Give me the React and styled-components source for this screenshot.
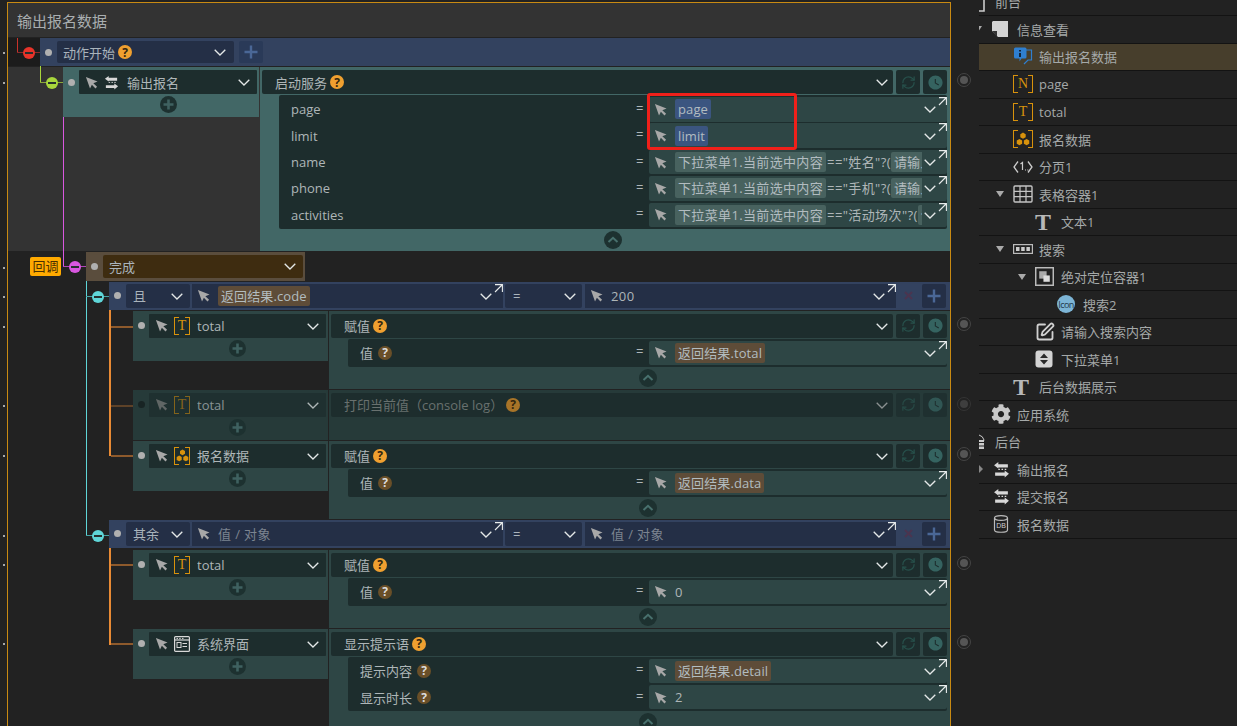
import React from 'react';
import styled, { createGlobalStyle } from 'styled-components';
import { RefreshCw, SquarePen } from 'lucide-react';
import { FaCog } from 'react-icons/fa';
import { MdWatchLater } from 'react-icons/md';

const Global = createGlobalStyle`
  html, body { margin: 0; padding: 0; background: #222; }
  body {
    font-family: "Open Sans", "Noto Sans CJK SC", sans-serif;
    font-size: 13px;
    color: #aeb6b8;
  }
  * { box-sizing: border-box; }
`;

const Page = styled.div`
  position: relative;
  display: flex;
  width: 1237px;
  height: 726px;
  overflow: hidden;
  background: #222;
`;

const SideGutter = styled.div`
  position: relative;
  flex: none;
  width: ${p => p.$w}px;
`;

const Pin = styled.i`
  position: absolute;
  left: 3px;
  top: ${p => p.$y}px;
  width: 2px;
  height: 2px;
  background: #aaa;
`;

const Target = styled.i`
  position: absolute;
  left: 6px;
  top: ${p => p.$y - 7}px;
  width: 14px;
  height: 14px;
  border-radius: 50%;
  border: 1px solid #444;
  opacity: ${p => (p.$faint ? 0.55 : 1)};
  &::after {
    content: '';
    position: absolute;
    inset: 2px;
    border-radius: 50%;
    background: #555;
  }
`;

const Editor = styled.div`
  flex: none;
  width: 944px;
  margin-top: 2px;
  border: 1px solid #c98a12;
  border-width: 1px 1px 0;
  height: 724px;
  overflow: hidden;
`;

const Title = styled.div`
  height: 34px;
  padding: 0 9px;
  line-height: 36px;
  font-size: 15px;
  color: #a9aeb0;
  background: #333;
`;

const StartRow = styled.div`
  display: flex;
  margin-top: 1px;
  height: 28px;
`;

const StartGap = styled.div`
  width: 32px;
  background: #1c1c1c;
`;

const Bar = styled.div`
  display: flex;
  align-items: center;
  flex: 1;
  height: 28px;
  background: #33425f;
`;

const CondBar = styled(Bar)`
  flex: none;
  margin: 0 0 ${p => p.$after || 1}px 101px;
`;

const DoneBar = styled(Bar)`
  flex: none;
  width: 219px;
  height: 29px;
  margin: 0 0 1px 78px;
  background: #5a4d3d;
`;

const Dot = styled.i`
  flex: none;
  width: 7px;
  height: 7px;
  margin: 0 ${p => p.$mr ?? 5}px 0 5px;
  border-radius: 50%;
  background: ${p => (p.$off ? '#182424' : '#b0b0b0')};
`;

const Select = styled.div`
  display: flex;
  align-items: center;
  flex: none;
  width: ${p => p.$w}px;
  height: ${p => p.$h || 24}px;
  padding: 0 ${p => p.$right || 6}px 0 ${p => p.$left || 6}px;
  margin-right: ${p => p.$mr || 0}px;
  border-radius: 2px;
  background: ${p => p.$bg || '#242f46'};
  color: #aab4bc;
`;

const Grow = styled.span`
  flex: 1;
  min-width: 0;
  overflow: hidden;
  white-space: nowrap;
`;

const SquareBtn = styled.div`
  display: flex;
  align-items: center;
  justify-content: center;
  flex: none;
  width: 24px;
  height: ${p => p.$h || 24}px;
  margin-left: ${p => p.$ml || 0}px;
  border-radius: 2px;
  background: ${p => p.$bg || 'transparent'};
`;

const Field = styled.div`
  position: relative;
  display: flex;
  align-items: center;
  flex: none;
  width: ${p => p.$w}px;
  height: 24px;
  margin-right: ${p => p.$mr || 0}px;
  padding-left: 5px;
  background: #242f46;
`;

const Corner = styled.svg`
  position: absolute;
  top: 0;
  right: 0;
`;

const Chip = styled.span`
  display: inline-block;
  height: 20px;
  line-height: 20px;
  padding: 0 3px;
  margin-right: 1px;
  border-radius: 2px;
  letter-spacing: ${p => p.$ls || 0.1}px;
  background: ${p => p.$bg};
  color: #b2bcc0;
`;

const Plain = styled.span`
  letter-spacing: 0.4px;
  color: ${p => p.$c || '#aeb6b8'};
`;

const ServiceBand = styled.div`
  display: flex;
  gap: 1px;
  margin-top: 1px;
  margin-bottom: 1px;
  padding-left: 55px;
  background: #333;
`;

const Step = styled.div`
  display: flex;
  gap: 1px;
  margin: 0 0 1px 125px;
`;

const NodeBox = styled.div`
  flex: none;
  align-self: flex-start;
  width: ${p => p.$w}px;
  height: 50px;
  padding: 3px 2px 0 0;
  background: ${p => p.$bg};
`;

const NodeTop = styled.div`
  display: flex;
  align-items: center;
`;

const NodeHead = styled.div`
  display: flex;
  align-items: center;
  flex: 1;
  height: 24px;
  padding: 0 7px 0 6px;
  border-radius: 1px;
  background: #1d2d2d;
  opacity: ${p => (p.$dim ? 0.72 : 1)};
`;

const IconSlot = styled.span`
  display: flex;
  align-items: center;
  flex: none;
  width: 18px;
  height: 18px;
  margin: 0 5px 0 6px;
`;

const AddRow = styled.div`
  display: flex;
  justify-content: center;
  padding: 2px 0 0 16px;
`;

const ActionBox = styled.div`
  flex: 1;
  min-width: 0;
  padding-top: 3px;
  height: ${p => (p.$h ? `${p.$h}px` : 'auto')};
  background: ${p => p.$bg};
`;

const ActionTop = styled.div`
  display: flex;
  gap: 3px;
  margin: 0 3px 1px 2px;
`;

const ActionHead = styled.div`
  display: flex;
  align-items: center;
  flex: 1;
  height: 24px;
  padding: 0 5px 0 13px;
  border-radius: 2px;
  background: #1d2d2d;
  color: ${p => (p.$dim ? '#69716f' : '#aeb6b8')};
`;

const ToolBtn = styled.div`
  display: flex;
  align-items: center;
  justify-content: center;
  width: 24px;
  height: 24px;
  border-radius: 2px;
  background: #1d2d2d;
  opacity: ${p => (p.$dim ? 0.7 : 1)};
`;

const Help = styled.span`
  display: inline-flex;
  align-items: center;
  justify-content: center;
  flex: none;
  width: 14px;
  height: 14px;
  margin-left: 3px;
  border-radius: 50%;
  font-size: 12px;
  font-weight: 700;
  background: ${p => p.$bg || '#f0a030'};
  color: ${p => p.$c || '#33260f'};
`;

const Params = styled.div`
  display: flex;
  flex-direction: column;
  gap: 1.9px;
  margin: 0 3px 0 19px;
  padding: 2px 0;
  border-radius: 2px;
  background: #1d2d2d;
`;

const ParamRow = styled.div`
  display: flex;
  align-items: center;
  height: 24.5px;
  padding-left: 12px;
`;

const ParamLabel = styled.span`
  display: flex;
  align-items: center;
  gap: 2px;
  flex: 1;
`;

const Equal = styled.span`
  flex: none;
  width: 13px;
  margin-top: -3px;
`;

const ValueBox = styled.div`
  position: relative;
  display: flex;
  align-items: center;
  flex: none;
  width: 298px;
  height: 24.5px;
  padding-left: 5px;
  border-radius: 2px;
  background: #2e4645;
`;

const ValueText = styled.span`
  flex: 1;
  min-width: 0;
  margin: 0 2px 0 8px;
  overflow: hidden;
  white-space: nowrap;
`;

const Collapse = styled.div`
  display: flex;
  align-items: center;
  justify-content: center;
  height: 21.5px;
  margin-left: 19px;
  margin-right: 3px;
`;

const Bracket = styled.span`
  position: relative;
  display: inline-flex;
  align-items: center;
  justify-content: center;
  flex: none;
  width: ${p => p.$w || 16}px;
  height: 18px;
  font: 400 14px "Liberation Serif", serif;
  color: ${p => (p.$dim ? '#a87310' : '#d8920c')};
  &::before,
  &::after {
    content: '';
    position: absolute;
    top: 0;
    bottom: 0;
    width: 4px;
    border: 1px solid currentColor;
  }
  &::before { left: 0; border-right: 0; }
  &::after { right: 0; border-left: 0; }
`;

const TreePanel = styled.div`
  flex: 1;
  min-width: 0;
  margin-top: -11.5px;
  overflow: hidden;
`;

const TreeRow = styled.div`
  display: flex;
  align-items: center;
  height: 27.5px;
  border-bottom: 1px solid #131313;
  overflow: hidden;
  background: ${p => (p.$on ? '#473e2c' : 'transparent')};
  color: #a5a9a9;
`;

const TreeInner = styled.div`
  position: relative;
  display: flex;
  align-items: center;
  margin-left: ${p => p.$level * 22 - 10}px;
`;

const TreeIcon = styled.span`
  display: flex;
  align-items: center;
  justify-content: ${p => (p.$center ? 'center' : 'flex-start')};
  flex: none;
  width: 20px;
  height: 20px;
  margin-right: 6px;
`;

const Caret = styled.i`
  position: absolute;
  left: ${p => (p.$small ? -12 : -17)}px;
  top: ${p => (p.$small ? 6 : 7)}px;
  border-style: solid;
  border-color: ${p => (p.$small ? 'transparent transparent transparent #888' : '#aaa transparent transparent')};
  border-width: ${p => (p.$small ? '4px 0 4px 4px' : '6px 4.5px 0')};
`;

const BigT = styled.span`
  font: 700 24px/20px "Liberation Serif", serif;
  color: #b8b8b8;
`;

const IconBadge = styled.span`
  display: flex;
  align-items: center;
  justify-content: center;
  width: 18px;
  height: 18px;
  border-radius: 50%;
  font-size: 9px;
  letter-spacing: -0.6px;
  background: #7db5d6;
  color: #22384a;
`;

const Wire = styled.i`
  position: absolute;
  left: ${p => p.$x}px;
  top: ${p => p.$y}px;
  width: ${p => p.$w || 1}px;
  height: ${p => p.$h || 1}px;
  background: ${p => p.$c};
`;

const Knob = styled.i`
  position: absolute;
  left: ${p => p.$x - 6}px;
  top: ${p => p.$y - 6}px;
  width: 12px;
  height: 12px;
  border-radius: 50%;
  background: ${p => p.$c};
  &::after {
    content: '';
    position: absolute;
    left: 2px;
    right: 2px;
    top: 5px;
    height: 2px;
    background: #26302f;
  }
`;

const CallbackTag = styled.span`
  position: absolute;
  left: 30px;
  top: 257px;
  width: 31px;
  height: 19px;
  border-radius: 2px;
  line-height: 19px;
  text-align: center;
  background: #ffaa00;
  color: #4a3000;
`;

const Highlight = styled.div`
  position: absolute;
  left: 647px;
  top: 93px;
  width: 150px;
  height: 57px;
  border: 3px solid #f0201a;
  border-radius: 3px;
`;

const Arrow = ({ dim }) => (
  <svg width="13" height="13" viewBox="0 0 14 14" style={{ flex: 'none' }}>
    <path d="M1 1 L13.5 6 L9 7.8 L13 11.5 L11.3 13.4 L7.4 9.4 L5.4 13.5 Z" fill={dim ? '#777' : '#a8a8a8'} />
  </svg>
);

const Chevron = ({ mr = 0, c = '#e4e8e8' }) => (
  <svg width="12" height="7" viewBox="0 0 12 7" style={{ flex: 'none', marginRight: mr, marginTop: 1 }}>
    <path d="M0.7 0.7 L6 6 L11.3 0.7" fill="none" stroke={c} strokeWidth="1.3" />
  </svg>
);

const CornerMark = () => (
  <Corner width="9" height="9" viewBox="0 0 9 9">
    <path d="M1 0.6 H8.4 V8 M8 1 L1 8" fill="none" stroke="#e8ecec" strokeWidth="1.1" />
  </Corner>
);

const Swap = ({ c = '#d8d8d8', size = 15 }) => (
  <svg width={size} height={size} viewBox="0 0 16 16">
    <path d="M1 4 L5 1 V3 H14 V6 H5 V7 Z M15 12 L11 9 V10.8 H2 V13.8 H11 V15.5 Z" fill={c} />
    <path d="M5 7.9 H6.5 M8 7.9 H9.5 M11 7.9 H12.5" stroke={c} strokeWidth="1" />
  </svg>
);

const HexStack = ({ size = 13 }) => (
  <svg width={size} height={size} viewBox="0 0 13 13">
    <g fill="currentColor">
      <path d="M6.5 0.5 L9 2 V4.8 L6.5 6.2 L4 4.8 V2 Z" />
      <path d="M3.2 6.6 L5.7 8 V10.9 L3.2 12.3 L0.7 10.9 V8 Z" />
      <path d="M9.8 6.6 L12.3 8 V10.9 L9.8 12.3 L7.3 10.9 V8 Z" />
    </g>
  </svg>
);

const WindowIcon = () => (
  <svg width="16" height="16" viewBox="0 0 16 16">
    <rect x="0.6" y="0.6" width="14.8" height="14.8" rx="1" fill="none" stroke="#d8d8d8" strokeWidth="1.2" />
    <path d="M1 4 H15" stroke="#d8d8d8" strokeWidth="1.2" />
    <path d="M2.5 2.4 H4 M5.2 2.4 H6.7 M8 2.4 H9.5" stroke="#d8d8d8" strokeWidth="1" />
    <rect x="3" y="6.5" width="4" height="5" fill="none" stroke="#d8d8d8" />
    <path d="M8.5 7.5 H13 M8.5 10.5 H13" stroke="#d8d8d8" />
  </svg>
);

const AddCircle = () => (
  <svg width="17" height="17" viewBox="0 0 17 17">
    <circle cx="8.5" cy="8.5" r="8.5" fill="#1d3130" />
    <path d="M8.5 3.5 V13.5 M3.5 8.5 H13.5" stroke="#3f6160" strokeWidth="2.6" />
  </svg>
);

const UpCircle = () => (
  <svg width="18" height="18" viewBox="0 0 18 18">
    <circle cx="9" cy="9" r="9" fill="#1d3130" />
    <path d="M4.5 11 L9 6.8 L13.5 11" fill="none" stroke="#48706d" strokeWidth="2" />
  </svg>
);

const BarPlus = () => (
  <svg width="14" height="14" viewBox="0 0 14 14">
    <path d="M7 0.5 V13.5 M0.5 7 H13.5" stroke="#4a6796" strokeWidth="2.4" />
  </svg>
);

const CrossMark = () => (
  <svg width="9" height="9" viewBox="0 0 9 9">
    <path d="M1 1 L8 8 M8 1 L1 8" stroke="#4a3550" strokeWidth="2" />
  </svg>
);

const Tools = ({ dim }) => (
  <>
    <ToolBtn $dim={dim}>
      <RefreshCw size={15} color="#27504b" strokeWidth={2} />
    </ToolBtn>
    <ToolBtn $dim={dim}>
      <MdWatchLater size={17} color="#356360" />
    </ToolBtn>
  </>
);

const Node = ({ w = 195, bg = '#2e4645', icon, label, dim }) => (
  <NodeBox $w={w} $bg={bg}>
    <NodeTop>
      <Dot $off={dim} $mr={4} />
      <NodeHead $dim={dim}>
        <Arrow dim={dim} />
        <IconSlot>{icon}</IconSlot>
        <Grow>{label}</Grow>
        <Chevron />
      </NodeHead>
    </NodeTop>
    <AddRow>
      <AddCircle />
    </AddRow>
  </NodeBox>
);

const Param = ({ label, help, children }) => (
  <ParamRow>
    <ParamLabel>
      {label}
      {help && <Help $bg="#6a4f28" $c="#ddd">?</Help>}
    </ParamLabel>
    <Equal>=</Equal>
    <ValueBox>
      <Arrow />
      <ValueText>{children}</ValueText>
      <Chevron mr={11} />
      <CornerMark />
    </ValueBox>
  </ParamRow>
);

const Action = ({ title, bg = '#2e4645', children }) => (
  <ActionBox $bg={bg}>
    <ActionTop>
      <ActionHead>
        <span>{title}</span>
        <Help>?</Help>
        <Grow />
        <Chevron />
      </ActionHead>
      <Tools />
    </ActionTop>
    <Params>{children}</Params>
    <Collapse>
      <UpCircle />
    </Collapse>
  </ActionBox>
);

const Condition = ({ name, left, right, after }) => (
  <CondBar $after={after}>
    <Dot />
    <Select $w={64} $mr={2} $left={7} $right={7}>
      <Grow>{name}</Grow>
      <Chevron />
    </Select>
    <Field $w={311} $mr={2}>
      <Arrow />
      <ValueText>{left}</ValueText>
      <Chevron mr={11} />
      <CornerMark />
    </Field>
    <Select $w={77} $mr={3} $left={8} $right={6}>
      <Grow>=</Grow>
      <Chevron />
    </Select>
    <Field $w={311}>
      <Arrow />
      <ValueText>{right}</ValueText>
      <Chevron mr={11} />
      <CornerMark />
    </Field>
    <SquareBtn>
      <CrossMark />
    </SquareBtn>
    <SquareBtn $ml={2} $bg="#242f46">
      <BarPlus />
    </SquareBtn>
  </CondBar>
);

const dropdownValue = text => (
  <>
    <Chip $bg="#48625f" $ls={0.35}>下拉菜单1.当前选中内容</Chip>
    <Plain>{text}</Plain>
    <Chip $bg="#48625f">请输入搜索内容</Chip>
  </>
);

const treeIcons = {
  front: (
    <svg width="20" height="20" viewBox="0 0 20 20">
      <path d="M10 4 H15 V19 H10" fill="none" stroke="#ccc" strokeWidth="1.6" />
    </svg>
  ),
  note: (
    <svg width="18" height="18" viewBox="0 0 18 18">
      <path d="M2 1 H17 V17 H7 L1 11 V2 Z" fill="#d4d4d4" />
      <path d="M6 17 V11 H1 Z" fill="#333" />
    </svg>
  ),
  info: (
    <svg width="20" height="20" viewBox="0 0 20 20">
      <path d="M13 3 H18.5 V13 H15 L11 17" fill="none" stroke="#2f7fd0" strokeWidth="1.2" />
      <path d="M1 2 Q1 0.5 2.5 0.5 H12 Q13.5 0.5 13.5 2 V10 Q13.5 11.5 12 11.5 H8.5 L6.5 14.5 V11.5 H2.5 Q1 11.5 1 10 Z" fill="#2f7fd0" />
      <path d="M7 3 V4.6 M7 6 V10" stroke="#10243c" strokeWidth="2" />
    </svg>
  ),
  page: <Bracket $w={20}>N</Bracket>,
  total: <Bracket $w={20}>T</Bracket>,
  hex: <Bracket $w={20}><HexStack size={14} /></Bracket>,
  pager: (
    <svg width="20" height="14" viewBox="0 0 20 14">
      <path d="M5 1.5 L1 7 L5 12.5 M15 1.5 L19 7 L15 12.5" fill="none" stroke="#ccc" strokeWidth="1.3" />
      <path d="M7.5 4 L9.5 2.5 V10" fill="none" stroke="#ccc" strokeWidth="1.2" />
      <path d="M12 10 H13 M14.3 10 H15.3" stroke="#ccc" />
    </svg>
  ),
  table: (
    <svg width="20" height="18" viewBox="0 0 20 18">
      <rect x="1" y="1" width="18" height="16" rx="1" fill="none" stroke="#c4c4c4" strokeWidth="1.4" />
      <path d="M7 1 V17 M13 1 V17 M1 6.3 H19 M1 11.6 H19" stroke="#c4c4c4" strokeWidth="1.2" />
    </svg>
  ),
  text: <BigT>T</BigT>,
  search: (
    <svg width="20" height="10" viewBox="0 0 20 10">
      <rect x="0.6" y="0.6" width="18.8" height="8.8" fill="none" stroke="#bbb" strokeWidth="1.2" />
      <path d="M3 3 H6.5 V7 H3 Z M8.2 3 H11.7 V7 H8.2 Z M13.4 3 H16.9 V7 H13.4 Z" fill="#ccc" />
    </svg>
  ),
  absolute: (
    <svg width="19" height="19" viewBox="0 0 18 18">
      <rect x="0.7" y="0.7" width="16.6" height="16.6" fill="none" stroke="#bbb" strokeWidth="1.4" />
      <rect x="4" y="4" width="7" height="7" fill="#aaa" />
      <rect x="8" y="8" width="6" height="6" fill="#ddd" />
    </svg>
  ),
  badge: <IconBadge>Icon</IconBadge>,
  input: <SquarePen size={20} color="#d0d0d0" strokeWidth={2.2} />,
  dropdown: (
    <svg width="18" height="18" viewBox="0 0 18 18">
      <rect x="0.5" y="0.5" width="17" height="17" rx="3" fill="#d4d4d4" />
      <path d="M9 3.5 L13 8 H5 Z M9 14.5 L5 10 H13 Z" fill="#2a2a2a" />
    </svg>
  ),
  gear: <FaCog size={20} color="#c8c8c8" />,
  back: (
    <svg width="20" height="20" viewBox="0 0 20 20">
      <path d="M10 3 Q14 4 15 8 L14 10" fill="none" stroke="#ccc" />
      <path d="M10 8 H15 V10 H10 Z M10 11 H15 V13.4 H10 Z M10 14.4 H15 V17 H10 Z" fill="#ccc" />
    </svg>
  ),
  swap: <Swap size={17} />,
  db: (
    <svg width="16" height="18" viewBox="0 0 16 18">
      <ellipse cx="8" cy="3" rx="6.5" ry="2.4" fill="none" stroke="#bbb" strokeWidth="1.2" />
      <path d="M1.5 3 V15 C1.5 18 14.5 18 14.5 15 V3" fill="none" stroke="#bbb" strokeWidth="1.2" />
      <text x="8" y="13" fontSize="7" textAnchor="middle" fill="#ccc" fontFamily="Liberation Sans, sans-serif">DB</text>
    </svg>
  ),
};

const treeRows = [
  { level: 0, icon: 'front', label: '前台' },
  { level: 1, icon: 'note', label: '信息查看', caret: true },
  { level: 2, icon: 'info', label: '输出报名数据', on: true },
  { level: 2, icon: 'page', label: 'page' },
  { level: 2, icon: 'total', label: 'total' },
  { level: 2, icon: 'hex', label: '报名数据' },
  { level: 2, icon: 'pager', label: '分页1' },
  { level: 2, icon: 'table', label: '表格容器1', caret: true },
  { level: 3, icon: 'text', label: '文本1' },
  { level: 2, icon: 'search', label: '搜索', caret: true },
  { level: 3, icon: 'absolute', label: '绝对定位容器1', caret: true },
  { level: 4, icon: 'badge', label: '搜索2' },
  { level: 3, icon: 'input', label: '请输入搜索内容' },
  { level: 3, icon: 'dropdown', label: '下拉菜单1' },
  { level: 2, icon: 'text', label: '后台数据展示' },
  { level: 1, icon: 'gear', label: '应用系统' },
  { level: 0, icon: 'back', label: '后台' },
  { level: 1, icon: 'swap', label: '输出报名', small: true },
  { level: 1, icon: 'swap', label: '提交报名' },
  { level: 1, icon: 'db', label: '报名数据' },
];

const leftPins = [52, 82, 267, 296, 326, 405, 455, 535, 564, 643];
const rightTargets = [
  { y: 80 },
  { y: 324 },
  { y: 404, faint: true },
  { y: 454 },
  { y: 563 },
  { y: 642 },
];

const wires = [
  { x: 17, y: 38, h: 15, c: '#c9322a' },
  { x: 17, y: 52, w: 23, c: '#8b2b2b' },
  { x: 40, y: 66, h: 17, c: '#a8d63c' },
  { x: 40, y: 82, w: 23, c: '#8aa83a' },
  { x: 63, y: 117, h: 150, c: '#d957e0' },
  { x: 63, y: 266, w: 23, c: '#b048b8' },
  { x: 86, y: 281, h: 255, c: '#5fd6d8' },
  { x: 86, y: 296, w: 23, c: '#47a3a5' },
  { x: 86, y: 535, w: 23, c: '#47a3a5' },
  { x: 109, y: 310, w: 2, h: 146, c: '#e88a34' },
  { x: 111, y: 326, w: 22, h: 2, c: '#8e5a2c' },
  { x: 111, y: 405, w: 22, h: 2, c: '#5e4228' },
  { x: 111, y: 455, w: 22, h: 2, c: '#8e5a2c' },
  { x: 109, y: 548, w: 2, h: 97, c: '#e88a34' },
  { x: 111, y: 564, w: 22, h: 2, c: '#8e5a2c' },
  { x: 111, y: 643, w: 22, h: 2, c: '#8e5a2c' },
];

const knobs = [
  { x: 28.5, y: 52.5, c: '#e8342a' },
  { x: 51.5, y: 82.5, c: '#a8d63c' },
  { x: 74.5, y: 266.5, c: '#d957e0' },
  { x: 97.5, y: 296.5, c: '#5fd6d8' },
  { x: 97.5, y: 535.5, c: '#5fd6d8' },
];

const centeredIcons = ['swap', 'db'];

const Tree = () => (
  <TreePanel>
    {treeRows.map((row, idx) => (
      <TreeRow key={idx} $on={row.on}>
        <TreeInner $level={row.level}>
          {(row.caret || row.small) && <Caret $small={row.small} />}
          <TreeIcon $center={centeredIcons.includes(row.icon)}>{treeIcons[row.icon]}</TreeIcon>
          <span>{row.label}</span>
        </TreeInner>
      </TreeRow>
    ))}
  </TreePanel>
);

const App = () => (
  <Page>
    <Global />
    <SideGutter $w={7}>
      {leftPins.map(y => <Pin key={y} $y={y} />)}
    </SideGutter>

    <Editor>
      <Title>输出报名数据</Title>

      <StartRow>
        <StartGap />
        <Bar>
          <Dot />
          <Select $w={177} $h={22} $left={6} $right={8}>
            <span>动作开始</span>
            <Help>?</Help>
            <Grow />
            <Chevron />
          </Select>
          <SquareBtn $ml={5} $h={22} $bg="#2a3a58">
            <BarPlus />
          </SquareBtn>
        </Bar>
      </StartRow>

      <ServiceBand>
        <Node w={196} bg="#426766" icon={<Swap />} label="输出报名" />
        <ActionBox $bg="#426766">
          <ActionTop>
            <ActionHead>
              <span>启动服务</span>
              <Help>?</Help>
              <Grow />
              <Chevron />
            </ActionHead>
            <Tools />
          </ActionTop>
          <Params>
            <Param label="page"><Chip $bg="#3b5580">page</Chip></Param>
            <Param label="limit"><Chip $bg="#3b5580">limit</Chip></Param>
            <Param label="name">{dropdownValue('=="姓名"?(')}</Param>
            <Param label="phone">{dropdownValue('=="手机"?(')}</Param>
            <Param label="activities">{dropdownValue('=="活动场次"?(')}</Param>
          </Params>
          <Collapse>
            <UpCircle />
          </Collapse>
        </ActionBox>
      </ServiceBand>

      <DoneBar>
        <Dot />
        <Select $w={200} $h={23} $bg="#3e2c10" $left={6} $right={7}>
          <Grow>完成</Grow>
          <Chevron />
        </Select>
      </DoneBar>

      <Condition
        name="且"
        left={<Chip $bg="#5e4c38">返回结果.code</Chip>}
        right={<Plain>200</Plain>}
      />

      <Step>
        <Node icon={<Bracket>T</Bracket>} label="total" />
        <Action title="赋值">
          <Param label="值" help><Chip $bg="#5e4c38">返回结果.total</Chip></Param>
        </Action>
      </Step>

      <Step>
        <Node dim bg="#263a39" icon={<Bracket $dim>T</Bracket>} label="total" />
        <ActionBox $bg="#263a39" $h={50}>
          <ActionTop>
            <ActionHead $dim>
              <span>打印当前值（console log）</span>
              <Help $bg="#a87428">?</Help>
              <Grow />
              <Chevron c="#8a9090" />
            </ActionHead>
            <Tools dim />
          </ActionTop>
        </ActionBox>
      </Step>

      <Step>
        <Node icon={<Bracket><HexStack /></Bracket>} label="报名数据" />
        <Action title="赋值">
          <Param label="值" help><Chip $bg="#5e4c38">返回结果.data</Chip></Param>
        </Action>
      </Step>

      <Condition
        name="其余"
        after={2}
        left={<Plain $c="#7c8490">值 / 对象</Plain>}
        right={<Plain $c="#7c8490">值 / 对象</Plain>}
      />

      <Step>
        <Node icon={<Bracket>T</Bracket>} label="total" />
        <Action title="赋值">
          <Param label="值" help><Plain>0</Plain></Param>
        </Action>
      </Step>

      <Step>
        <Node icon={<WindowIcon />} label="系统界面" />
        <Action title="显示提示语">
          <Param label="提示内容" help><Chip $bg="#5e4c38">返回结果.detail</Chip></Param>
          <Param label="显示时长" help><Plain>2</Plain></Param>
        </Action>
      </Step>
    </Editor>

    <SideGutter $w={28}>
      {rightTargets.map(t => <Target key={t.y} $y={t.y} $faint={t.faint} />)}
    </SideGutter>

    <Tree />

    {wires.map((w, idx) => (
      <Wire key={idx} $x={w.x} $y={w.y} $w={w.w} $h={w.h} $c={w.c} />
    ))}
    {knobs.map((k, idx) => <Knob key={idx} $x={k.x} $y={k.y} $c={k.c} />)}
    <CallbackTag>回调</CallbackTag>
    <Highlight />
  </Page>
);

export default App;
